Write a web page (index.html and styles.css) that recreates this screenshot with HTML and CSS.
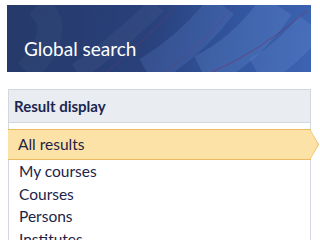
FILE: index.html
```html
<!DOCTYPE html>
<html lang="en">
<head>
    <meta charset="UTF-8">
    <meta name="viewport" content="width=device-width, initial-scale=1.0">
    <title>Global search</title>
    <link rel="stylesheet" href="styles.css">
</head>
<body>

    <div class="banner">
        <svg class="banner-art" viewBox="0 0 304 67" preserveAspectRatio="none">
            <path d="M30 0 Q60 25 20 67" stroke="rgba(255,255,255,0.03)" stroke-width="25" fill="none"/>
            <path d="M150 0 Q110 40 70 67" stroke="rgba(255,255,255,0.04)" stroke-width="18" fill="none"/>
            <path d="M215 0 Q185 40 140 67" stroke="rgba(110,150,220,0.18)" stroke-width="30" fill="none"/>
            <path d="M270 0 Q240 45 195 67" stroke="rgba(130,170,235,0.18)" stroke-width="35" fill="none"/>
            <path d="M304 20 Q280 50 250 67" stroke="rgba(140,180,240,0.15)" stroke-width="30" fill="none"/>
            <path d="M170 0 Q135 38 100 67" stroke="#7a3a6a" stroke-width="0.7" fill="none" opacity="0.6"/>
            <path d="M228 0 Q200 35 158 67" stroke="#7a3a6a" stroke-width="0.7" fill="none" opacity="0.5"/>
            <path d="M300 6 Q250 48 205 67" stroke="#6a3a70" stroke-width="0.9" fill="none" opacity="0.8"/>
        </svg>
        <h1>Global search</h1>
    </div>

    <div class="result-panel">
        <div class="result-title">Result display</div>
        <ul class="result-list">
            <li class="active">All results</li>
            <li>My courses</li>
            <li>Courses</li>
            <li>Persons</li>
            <li>Institutes</li>
        </ul>
    </div>

</body>
</html>
```

FILE: styles.css
```css
body {
    font-family: 'Lato', 'Liberation Sans', sans-serif;
    margin: 0;
    padding: 5px 9px 0 7px;
    background-color: #fff;
    color: #1c2447;
    overflow: hidden;
}
.banner {
    position: relative;
    height: 67px;
    background: linear-gradient(100deg, #253a69 0%, #29407a 45%, #3356a0 75%, #3d64b2 100%);
    overflow: hidden;
    display: flex;
    align-items: flex-end;
}
.banner-art {
    position: absolute;
    left: 0;
    top: 0;
    width: 100%;
    height: 100%;
}
.banner h1 {
    position: relative;
    margin: 0 0 12px 17px;
    font-size: 19px;
    font-weight: normal;
    color: #fff;
    line-height: 23px;
}
.result-panel {
    margin-top: 17px;
    margin-left: 1px;
    border: 1px solid #d3d7de;
    border-bottom: none;
    width: 301px;
}
.result-title {
    background-color: #e9ecf1;
    border-bottom: 1px solid #d3d7de;
    height: 32px;
    line-height: 32px;
    padding-left: 5px;
    font-size: 15px;
    font-weight: bold;
    color: #1a2650;
}
.result-list {
    list-style: none;
    margin: 6px 0 0 0;
    padding: 0;
}
.result-list li {
    font-size: 15.5px;
    line-height: 22.5px;
    padding-left: 10px;
}
.result-list li.active {
    position: relative;
    margin-left: -1px;
    margin-right: -1px;
    height: 29px;
    line-height: 29px;
    padding-left: 10px;
    background-color: #fce2a6;
    border-top: 1px solid #ebbc62;
    border-bottom: 1px solid #ebbc62;
}
.result-list li.active::after {
    content: "";
    position: absolute;
    right: -8px;
    top: -1px;
    width: 9px;
    height: 31px;
    background-color: #ebbc62;
    clip-path: polygon(0 0, 100% 50%, 0 100%);
}
.result-list li.active::before {
    content: "";
    position: absolute;
    right: -7px;
    top: 0;
    width: 8px;
    height: 29px;
    background-color: #fce2a6;
    clip-path: polygon(0 0, 100% 50%, 0 100%);
    z-index: 1;
}
```
